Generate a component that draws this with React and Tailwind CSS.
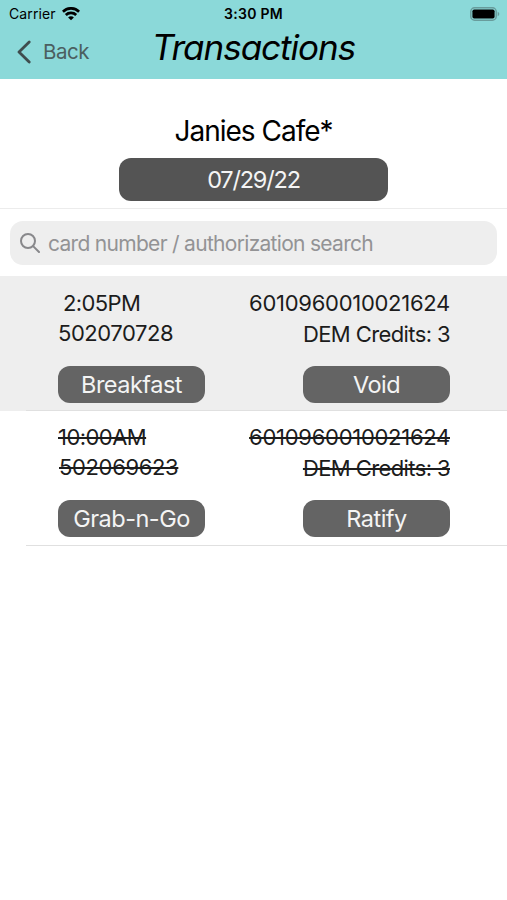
const transactions = [
  {
    id: '502070728',
    time: '2:05PM',
    timeClass: 'pl-[5px] tracking-[-0.6px]',
    idClass: 'tracking-[-0.45px]',
    card: '6010960010021624',
    credits: 'DEM Credits: 3',
    meal: 'Breakfast',
    action: 'Void',
    voided: false,
  },
  {
    id: '502069623',
    time: '10:00AM',
    timeClass: 'tracking-[-0.55px]',
    idClass: 'pl-px tracking-[-0.35px]',
    card: '6010960010021624',
    credits: 'DEM Credits: 3',
    meal: 'Grab-n-Go',
    action: 'Ratify',
    voided: true,
  },
];

function WifiIcon() {
  return (
    <svg width="18" height="14" viewBox="0 0 18 14" fill="none" stroke="#000" strokeWidth="2.7">
      <path d="M0.9 4.7C5.4 0.2 12.6 0.2 17.1 4.7" />
      <path d="M3.8 8C6.6 5.2 11.4 5.2 14.2 8" />
      <path d="M9 13.3L6.1 10.4C7.7 8.8 10.3 8.8 11.9 10.4Z" fill="#000" stroke="none" />
    </svg>
  );
}

function BatteryIcon() {
  return (
    <svg width="30" height="14" viewBox="0 0 30 14">
      <rect x="0.8" y="0.8" width="25.4" height="12.4" rx="3.8" fill="none" stroke="#689c9c" strokeWidth="1.5" />
      <rect x="2.4" y="2.4" width="22.2" height="9.2" rx="1.8" fill="#000" />
      <path d="M27.7 4.8C29.8 5.6 29.8 8.4 27.7 9.2Z" fill="#689c9c" />
    </svg>
  );
}

function PillButton({ children, className }) {
  return (
    <button className={`flex h-[37px] w-[147px] items-center justify-center rounded-[12px] bg-[#646464] text-[23.5px] leading-none tracking-[-0.5px] text-[#f4f4f4] ${className || ''}`}>
      {children}
    </button>
  );
}

function TransactionRow({ item }) {
  const strike = item.voided ? 'line-through decoration-[2px]' : '';
  return (
    <li className={item.voided ? 'bg-white' : 'bg-[#eeeeee]'}>
      <div className={`flex h-[134px] justify-between pr-[57px] pl-[58px] text-[22px] leading-[30px] text-[#1c1c1c] ${item.voided ? 'pt-[11px]' : 'pt-[12px]'}`}>
        <div className="flex flex-col">
          <span className={item.timeClass}><span className={strike}>{item.time}</span></span>
          <span className={item.idClass}><span className={strike}>{item.id}</span></span>
          <PillButton className="mt-[18px]">{item.meal}</PillButton>
        </div>
        <div className="flex flex-col items-end">
          <span className={`tracking-[-0.28px] ${strike}`}>{item.card}</span>
          <span className={`mt-[1px] tracking-[-0.6px] ${strike}`}>{item.credits}</span>
          <PillButton className="mt-[17px]">{item.action}</PillButton>
        </div>
      </div>
      <div className="ml-[26px] h-px bg-[#e0e0e0]" />
    </li>
  );
}

export default function App() {
  return (
    <div className="h-[900px] w-[507px] overflow-hidden bg-white font-['Inter',sans-serif] whitespace-nowrap text-black">
      <header className="h-[79px] bg-[#8bd9d9]">
        <div className="grid h-[27px] grid-cols-3 items-center px-[9px] text-[14px] leading-none">
          <div className="flex items-center gap-[6px]">
            <span className="tracking-[0.1px]">Carrier</span>
            <WifiIcon />
          </div>
          <span className="text-center font-semibold tracking-[0.3px]">3:30 PM</span>
          <div className="-mr-[2px] flex justify-end">
            <BatteryIcon />
          </div>
        </div>
        <div className="grid h-[52px] grid-cols-[127px_1fr_127px]">
          <button className="flex h-[50px] items-center gap-[12px] pl-[17px] text-[20.5px] tracking-[-0.5px] text-[#4b5f60]">
            <svg width="14" height="24" viewBox="0 0 14 24" fill="none" stroke="#3f4d4e" strokeWidth="2.8" strokeLinecap="round" strokeLinejoin="round">
              <path d="M12.2 2L2 12L12.2 22" />
            </svg>
            <span>Back</span>
          </button>
          <h1 className="text-center text-[35px] leading-[40px] tracking-[-1px] italic">Transactions</h1>
        </div>
      </header>

      <section className="flex h-[130px] flex-col items-center border-b border-[#ececec] pt-[34px]">
        <h2 className="text-[28px] leading-[36px] tracking-[-1px]">Janies Cafe*</h2>
        <button className="mt-[9px] flex h-[43px] w-[269px] items-center justify-center rounded-[12px] bg-[#545454] text-[23.5px] leading-none tracking-[-1.2px] text-[#f4f4f4]">
          07/29/22
        </button>
      </section>

      <section className="px-[10px] pt-[12px] pb-[11px]">
        <label className="flex h-[44px] items-center gap-[8px] rounded-[13px] bg-[#eeeeee] pl-[10px] text-[#939395]">
          <svg width="20" height="20" viewBox="0 0 20 20" fill="none" stroke="#88888b" strokeWidth="2" strokeLinecap="round">
            <circle cx="8" cy="8" r="7" />
            <path d="M13.1 13.1L19 19" />
          </svg>
          <span className="text-[21px] leading-none tracking-[-0.7px]">card number / authorization search</span>
        </label>
      </section>

      <ul>
        {transactions.map((item) => (
          <TransactionRow key={item.id} item={item} />
        ))}
      </ul>
    </div>
  );
}
